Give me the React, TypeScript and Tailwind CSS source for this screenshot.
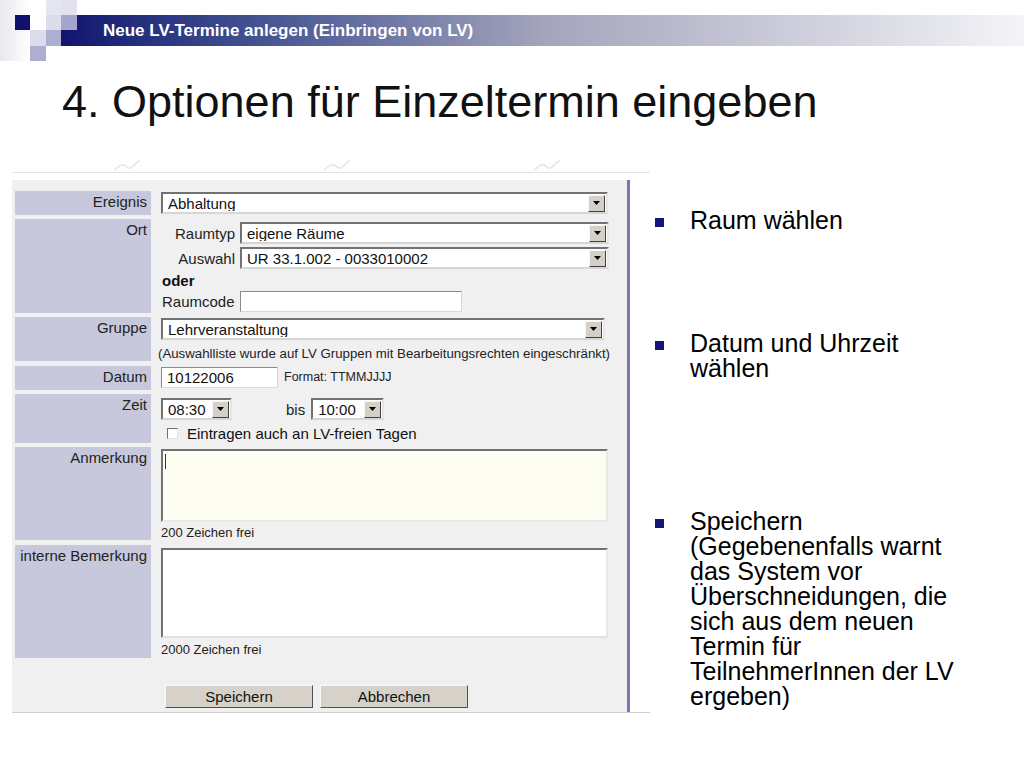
import type { ReactNode } from "react";

const sans = "font-['Liberation_Sans',Arial,sans-serif]";

function Arrow() {
  return (
    <span className="flex h-[17px] w-[17px] shrink-0 items-center justify-center border border-t-[#f6f6f6] border-l-[#f6f6f6] border-r-[#404040] border-b-[#404040] bg-[#d4d0c8]">
      <svg width="7" height="4" viewBox="0 0 7 4">
        <path d="M0 0h7L3.5 4z" fill="#000" />
      </svg>
    </span>
  );
}

function Select({ value, className }: { value: string; className: string }) {
  return (
    <div
      className={`flex h-[22px] items-center border-2 border-t-[#727272] border-l-[#727272] border-r-[#e6e6e6] border-b-[#d6d6d6] bg-white pl-[5px] pr-[1px] ${className}`}
    >
      <span className="flex-1 truncate text-[15px] leading-none text-[#111]">{value}</span>
      <Arrow />
    </div>
  );
}

function Row({ label, className, children }: { label: string; className: string; children: ReactNode }) {
  return (
    <div className={`flex gap-[10px] ${className}`}>
      <div className="w-[136px] shrink-0 bg-[#c8c8dc] pr-[4px] pt-[2px] text-right text-[15px] leading-[18px] text-[#222]">
        {label}
      </div>
      <div className="flex min-w-0 flex-1 flex-col">{children}</div>
    </div>
  );
}

function Bullet({ children, className }: { children: ReactNode; className: string }) {
  return (
    <div className={`flex ${className}`}>
      <span className="mt-[10px] ml-[5px] h-[9px] w-[9px] shrink-0 bg-[#14147a]" />
      <p className="ml-[26px] w-[285px] text-[25px] leading-[25px] text-black">{children}</p>
    </div>
  );
}

function Squiggle() {
  return (
    <svg width="30" height="12" viewBox="0 0 30 12" className="opacity-60">
      <path d="M2 10c4-2 6-7 10-5s4 5 8 2 5-6 8-6" fill="none" stroke="#d4d4d4" strokeWidth="1.5" />
    </svg>
  );
}

export default function App() {
  return (
    <div className={`relative h-[768px] w-[1024px] overflow-hidden bg-white ${sans}`}>
      {/* header band */}
      <div className="flex h-[61px]">
        <div className="grid h-[61px] w-[61px] grid-cols-[15px_15px_16px_15px] grid-rows-[15px_15px_16px_15px] bg-gradient-to-r from-[#e8e8ee] via-white to-white">
          <span />
          <span />
          <span />
          <span className="bg-[#e6e6f2]" />
          <span />
          <span className="bg-[#10106e]" />
          <span />
          <span className="bg-[#dcdcec]" />
          <span />
          <span />
          <span className="bg-[#dcdcec]" />
          <span className="bg-[#aeaed2]" />
          <span />
          <span />
          <span className="bg-[#aeaed2]" />
          <span />
        </div>
        <div className="relative mt-[15px] flex h-[31px] flex-1 items-center bg-gradient-to-r from-[#13136f] via-[#a4a4bc] to-[#f4f4f8] pl-[42px]">
          <span className="absolute left-0 top-0 h-[15px] w-[16px] bg-[#a6a6cc]" />
          <span className="absolute -top-[15px] left-0 h-[15px] w-[16px] bg-[#e2e2ee]" />
          <span className="text-[17px] font-bold leading-none text-white">Neue LV-Termine anlegen (Einbringen von LV)</span>
        </div>
      </div>

      <h1 className="ml-[62px] mt-[18px] text-[45px] leading-[45px] text-[#111]">4. Optionen für Einzeltermin eingeben</h1>

      <div className="mt-[36px] flex">
        {/* form screenshot */}
        <div className="ml-[12px] w-[638px]">
          <div className="flex h-[12px] items-end gap-[180px] pl-[100px]">
            <Squiggle />
            <Squiggle />
            <Squiggle />
          </div>
          <div className="h-px bg-[#e2e2e2]" />
          <div className="h-[7px]" />
          <div className="flex">
            <div className="w-[618px] border-r-[3px] border-[#7d74b8] bg-[#f0f0f0] pb-[4px] pl-[3px] pt-[11px]">
              <div className="flex flex-col">
                <Row label="Ereignis" className="h-[24px]">
                  <Select value="Abhaltung" className="mt-[1px] h-[21px] w-[447px]" />
                </Row>

                <Row label="Ort" className="mt-[4px] h-[94px]">
                  <div className="mt-[3px] flex items-center">
                    <span className="w-[74px] text-right text-[15px] leading-none text-[#222]">Raumtyp</span>
                    <Select value="eigene Räume" className="ml-[5px] w-[369px]" />
                  </div>
                  <div className="mt-[3px] flex items-center">
                    <span className="w-[74px] text-right text-[15px] leading-none text-[#222]">Auswahl</span>
                    <Select value="UR 33.1.002 - 0033010002" className="ml-[5px] w-[369px]" />
                  </div>
                  <span className="mt-[4px] pl-[1px] text-[15px] font-bold leading-[15px] text-[#111]">oder</span>
                  <div className="mt-[3px] flex items-center">
                    <span className="w-[79px] pl-[1px] text-[15px] leading-none text-[#222]">Raumcode</span>
                    <span className="h-[21px] w-[222px] border border-t-[#8a8a8a] border-l-[#8a8a8a] border-r-[#d8d8d8] border-b-[#d8d8d8] bg-white" />
                  </div>
                </Row>

                <Row label="Gruppe" className="mt-[4px] h-[44px]">
                  <Select value="Lehrveranstaltung" className="mt-[1px] w-[444px]" />
                  <span className="-ml-[3px] mt-[7px] whitespace-nowrap text-[13.25px] leading-none text-[#222]">
                    (Auswahlliste wurde auf LV Gruppen mit Bearbeitungsrechten eingeschränkt)
                  </span>
                </Row>

                <Row label="Datum" className="mt-[5px] h-[24px]">
                  <div className="mt-[1px] flex items-center">
                    <span className="flex h-[21px] w-[117px] items-center border border-t-[#8a8a8a] border-l-[#8a8a8a] border-r-[#d8d8d8] border-b-[#d8d8d8] bg-white pl-[5px] text-[15px] leading-none text-[#111]">
                      10122006
                    </span>
                    <span className="ml-[6px] text-[12.5px] leading-none text-[#222]">Format: TTMMJJJJ</span>
                  </div>
                </Row>

                <Row label="Zeit" className="mt-[4px] h-[49px]">
                  <div className="mt-[4px] flex items-center">
                    <Select value="08:30" className="h-[21px] w-[71px]" />
                    <span className="ml-[54px] text-[15px] leading-none text-[#222]">bis</span>
                    <Select value="10:00" className="ml-[6px] h-[21px] w-[73px]" />
                  </div>
                  <div className="mt-[6px] flex items-center pl-[6px]">
                    <span className="h-[11px] w-[11px] border border-t-[#707070] border-l-[#707070] border-r-[#e0e0e0] border-b-[#e0e0e0] bg-white" />
                    <span className="ml-[9px] text-[15px] leading-none text-[#111]">Eintragen auch an LV-freien Tagen</span>
                  </div>
                </Row>

                <Row label="Anmerkung" className="mt-[4px] h-[93px]">
                  <div className="mt-[2px] h-[73px] w-[447px] border-2 border-t-[#727272] border-l-[#727272] border-r-[#e8e8e8] border-b-[#e8e8e8] bg-[#fdfdf1] pl-[2px] pt-[3px]">
                    <span className="block h-[15px] w-px bg-[#333]" />
                  </div>
                  <span className="mt-[4px] text-[13px] leading-none text-[#222]">200 Zeichen frei</span>
                </Row>

                <Row label="interne Bemerkung" className="mt-[5px] h-[113px]">
                  <div className="mt-[3px] h-[90px] w-[447px] border-2 border-t-[#727272] border-l-[#727272] border-r-[#e8e8e8] border-b-[#e0e0e0] bg-white" />
                  <span className="mt-[5px] text-[13px] leading-none text-[#222]">2000 Zeichen frei</span>
                </Row>

                <div className="ml-[150px] mt-[27px] flex gap-[7px]">
                  <span className="flex h-[23px] w-[148px] items-center justify-center border border-t-[#f8f8f8] border-l-[#f8f8f8] border-r-[#505050] border-b-[#505050] bg-[#d6d2ca] text-[15px] leading-none text-[#111]">
                    Speichern
                  </span>
                  <span className="flex h-[23px] w-[148px] items-center justify-center border border-t-[#f8f8f8] border-l-[#f8f8f8] border-r-[#505050] border-b-[#505050] bg-[#d6d2ca] text-[15px] leading-none text-[#111]">
                    Abbrechen
                  </span>
                </div>
              </div>
            </div>
          </div>
          <div className="h-px bg-[#cfcfcf]" />
        </div>

        {/* bullets */}
        <div className="flex flex-col">
          <Bullet className="mt-[48px]">Raum wählen</Bullet>
          <Bullet className="mt-[98px]">Datum und Uhrzeit wählen</Bullet>
          <Bullet className="mt-[128px]">
            Speichern (Gegebenenfalls warnt das System vor Überschneidungen, die sich aus dem neuen Termin für
            TeilnehmerInnen der LV ergeben)
          </Bullet>
        </div>
      </div>
    </div>
  );
}
